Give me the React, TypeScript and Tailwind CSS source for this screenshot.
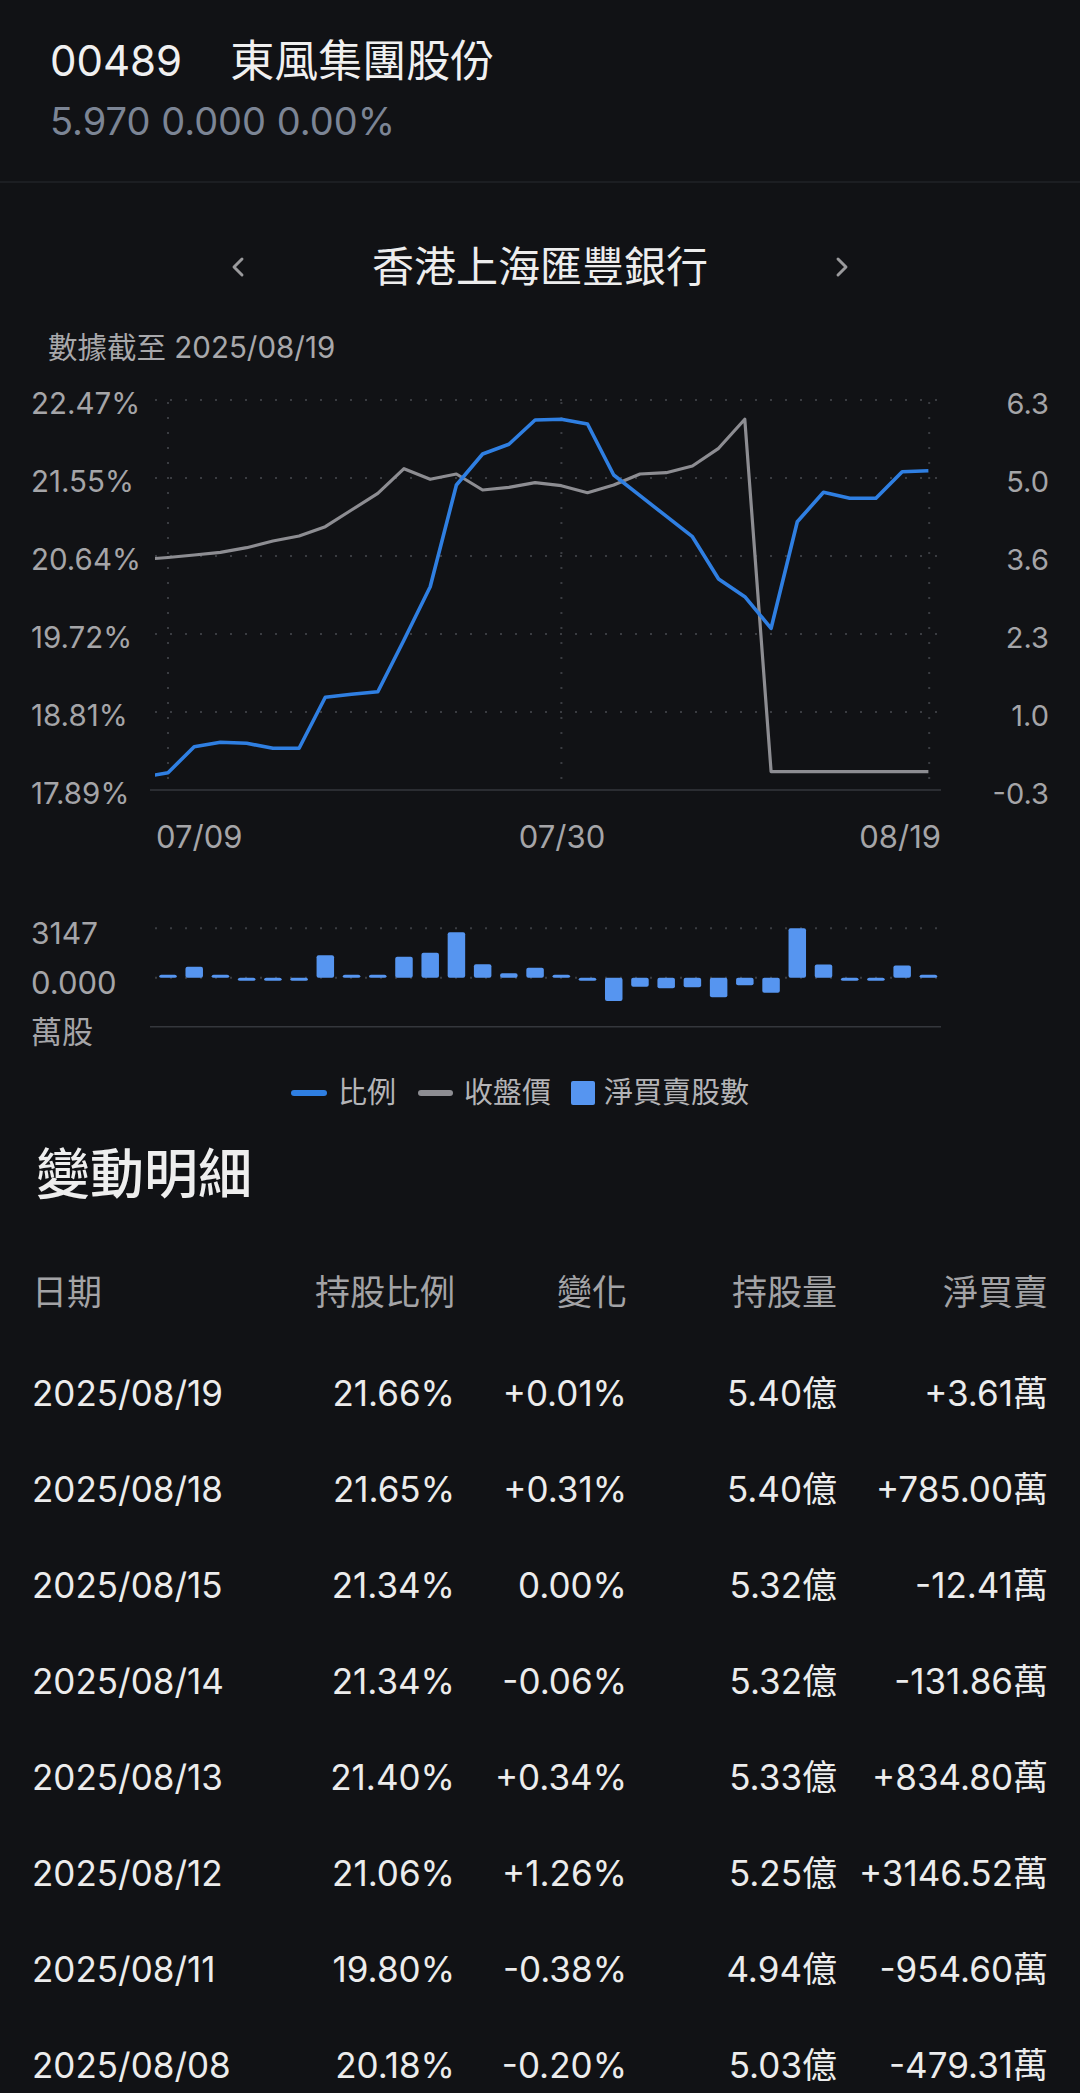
import { ChevronLeft, ChevronRight } from 'lucide-react'

const FONT = "Inter, 'Noto Sans CJK TC', sans-serif"

// x of each trading day, first entry (07/08) sits left of the plot and is clipped
const X0 = 168
const DX = 26.22
const xAt = (i: number) => X0 + (i - 1) * DX

const ratioY = [
  777.3, 772.7, 746.7, 742.3, 743.3, 748.3, 748.3, 697.3, 694.3, 691.7, 640, 586.7, 485, 454, 444.3, 420,
  419.3, 424, 475, 495.6, 516.2, 536.7, 579, 596.7, 628.3, 521.7, 492.3, 498.3, 498.3, 471.7, 470.7,
]

const priceY = [
  559.5, 557.5, 555, 552.3, 547.7, 541, 536, 526.7, 510, 493.3, 468.7, 479.3, 474, 490, 487.3, 482.7,
  485.7, 492.7, 485, 474, 472.7, 466, 448.3, 419.3, 771.7, 771.7, 771.7, 771.7, 771.7, 771.7, 771.7,
]

// 淨買賣 (萬股) from 07/09 to 08/19
const netFlow = [
  50, 700, 50, -50, -50, -50, 1427, 50, 50, 1338, 1592, 2892, 853, 280, 637, 50, -50, -1484, -573, -675,
  -611, -1248, -479.31, -954.6, 3146.52, 834.8, -131.86, -12.41, 785, 3.61,
]

const rows = [
  ['2025/08/19', '21.66%', '+0.01%', '5.40億', '+3.61萬'],
  ['2025/08/18', '21.65%', '+0.31%', '5.40億', '+785.00萬'],
  ['2025/08/15', '21.34%', '0.00%', '5.32億', '-12.41萬'],
  ['2025/08/14', '21.34%', '-0.06%', '5.32億', '-131.86萬'],
  ['2025/08/13', '21.40%', '+0.34%', '5.33億', '+834.80萬'],
  ['2025/08/12', '21.06%', '+1.26%', '5.25億', '+3146.52萬'],
  ['2025/08/11', '19.80%', '-0.38%', '4.94億', '-954.60萬'],
  ['2025/08/08', '20.18%', '-0.20%', '5.03億', '-479.31萬'],
]

const toPoints = (ys: number[]) => ys.map((y, i) => `${xAt(i).toFixed(1)},${y}`).join(' ')

function MainChart() {
  const grid = [400, 478, 556, 634, 712]
  const leftLabels = ['22.47%', '21.55%', '20.64%', '19.72%', '18.81%', '17.89%']
  const rightLabels = ['6.3', '5.0', '3.6', '2.3', '1.0', '-0.3']

  return (
    <svg width="1080" height="480" viewBox="0 380 1080 480" className="block" fontFamily={FONT}>
      <defs>
        <clipPath id="plot">
          <rect x="155" y="380" width="786" height="420" />
        </clipPath>
      </defs>

      {grid.map((y) => (
        <line key={y} x1={155} x2={941} y1={y} y2={y} stroke="#3a3c41" strokeWidth={2} strokeDasharray="2 13" />
      ))}
      {[168, 561.4, 929.2].map((x) => (
        <line key={x} x1={x} x2={x} y1={402} y2={790} stroke="#3a3c41" strokeWidth={2} strokeDasharray="2 13" />
      ))}
      <line x1={150} x2={941} y1={790} y2={790} stroke="#35373c" strokeWidth={1.5} />

      <g clipPath="url(#plot)">
        <polyline points={toPoints(priceY)} fill="none" stroke="#8d8d92" strokeWidth={3.2} strokeLinejoin="round" />
        <polyline points={toPoints(ratioY)} fill="none" stroke="#2f7fe2" strokeWidth={3.6} strokeLinejoin="round" />
      </g>

      {leftLabels.map((t, k) => (
        <text key={t} x={31} y={403 + k * 78} dominantBaseline="central" fontSize={29.5} fill="#a5a5a8">
          {t}
        </text>
      ))}
      {rightLabels.map((t, k) => (
        <text key={t} x={1049} y={403 + k * 78} dominantBaseline="central" textAnchor="end" fontSize={29} fill="#a5a5a8">
          {t}
        </text>
      ))}

      <text x={156} y={836} dominantBaseline="central" fontSize={31} fill="#a5a5a8">07/09</text>
      <text x={562} y={836} dominantBaseline="central" textAnchor="middle" fontSize={31} fill="#a5a5a8">07/30</text>
      <text x={941} y={836} dominantBaseline="central" textAnchor="end" fontSize={31} fill="#a5a5a8">08/19</text>
    </svg>
  )
}

function FlowChart() {
  const zero = 977.7
  const scale = 49.4 / 3147

  return (
    <svg width="1080" height="150" viewBox="0 900 1080 150" className="block" fontFamily={FONT}>
      <line x1={155} x2={941} y1={928.3} y2={928.3} stroke="#3a3c41" strokeWidth={2} strokeDasharray="2 13" />
      <line x1={155} x2={941} y1={zero} y2={zero} stroke="#3a3c41" strokeWidth={2} strokeDasharray="2 13" />
      <line x1={150} x2={941} y1={1026.7} y2={1026.7} stroke="#35373c" strokeWidth={1.5} />

      {netFlow.map((v, i) => {
        const h = Math.max(3, Math.abs(v) * scale)
        const x = X0 + i * DX - 8.75
        return (
          <rect key={i} x={x} y={v >= 0 ? zero - h : zero} width={17.5} height={h} rx={2} fill="#5695f0" />
        )
      })}

      <text x={31} y={933} dominantBaseline="central" fontSize={30} fill="#a5a5a8">3147</text>
      <text x={31} y={982} dominantBaseline="central" fontSize={31} fill="#a5a5a8">0.000</text>
      <text x={31} y={1031} dominantBaseline="central" fontSize={31} fill="#a5a5a8">萬股</text>
    </svg>
  )
}

export default function App() {
  return (
    <div className="min-h-screen bg-[#111215] text-[#ececec] font-[family-name:Inter,_'Noto_Sans_CJK_TC',_sans-serif]">
      {/* stock header */}
      <div className="px-[50px] pt-[37px] pb-[36px] border-b-2 border-[#1c1e22]">
        <div className="flex items-center h-[48px]">
          <span className="text-[42px] leading-[48px] text-[#f0f0f0]">00489</span>
          <span className="ml-[48px] text-[44px] leading-[48px] text-[#f0f0f0]">東風集團股份</span>
        </div>
        <div className="mt-[12px] h-[48px] text-[38px] leading-[48px] text-[#7c8595]">5.970 0.000 0.00%</div>
      </div>

      {/* holder switcher */}
      <div className="mt-[56px] flex items-center justify-center gap-[118px] h-[56px]">
        <ChevronLeft className="w-[32px] h-[32px] text-[#9a9a9c]" strokeWidth={2.2} />
        <span className="text-[42px] leading-[56px] text-[#ededed]">香港上海匯豐銀行</span>
        <ChevronRight className="w-[32px] h-[32px] text-[#9a9a9c]" strokeWidth={2.2} />
      </div>

      <div className="mt-[34px] pl-[48px] text-[29.5px] leading-[36px] text-[#a8a8ab]">數據截至 2025/08/19</div>

      <div className="mt-[15px]">
        <MainChart />
      </div>
      <div className="mt-[40px]">
        <FlowChart />
      </div>

      {/* legend */}
      <div className="mt-[23px] h-[40px] pl-[291px] flex items-center text-[29px] leading-[40px] text-[#b4b4b7]">
        <span className="w-[36px] h-[6px] rounded-full bg-[#2f7fe2]" />
        <span className="ml-[11px]">比例</span>
        <span className="ml-[22px] w-[35px] h-[6px] rounded-full bg-[#8d8d92]" />
        <span className="ml-[11px]">收盤價</span>
        <span className="ml-[20px] w-[24px] h-[24px] rounded-[2px] bg-[#5695f0]" />
        <span className="ml-[9px]">淨買賣股數</span>
      </div>

      {/* detail table */}
      <div className="mt-[30px] pl-[36px] text-[54px] leading-[64px] font-medium text-[#eeeeee]">變動明細</div>

      <div className="mt-[61px] px-[32px]">
        <div className="grid grid-cols-[243px_180px_172px_210px_211px] h-[48px] items-center text-[35px] leading-[48px] text-[#a3a3a6]">
          <span>日期</span>
          <span className="text-right">持股比例</span>
          <span className="text-right">變化</span>
          <span className="text-right">持股量</span>
          <span className="text-right">淨買賣</span>
        </div>
        <div className="mt-[29px]">
          {rows.map((r) => (
            <div
              key={r[0]}
              className="grid grid-cols-[243px_180px_172px_210px_211px] h-[96px] items-center text-[35px] leading-[48px] text-[#ececec]"
            >
              <span>{r[0]}</span>
              <span className="text-right">{r[1]}</span>
              <span className="text-right">{r[2]}</span>
              <span className="text-right">{r[3]}</span>
              <span className="text-right">{r[4]}</span>
            </div>
          ))}
        </div>
      </div>
    </div>
  )
}
